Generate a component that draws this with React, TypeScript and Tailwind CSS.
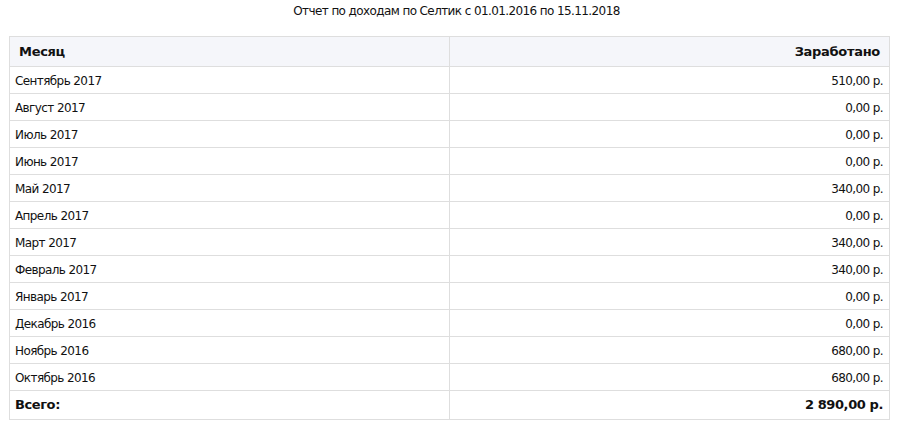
const rows: [string, string][] = [
  ['Сентябрь 2017', '510,00 р.'],
  ['Август 2017', '0,00 р.'],
  ['Июль 2017', '0,00 р.'],
  ['Июнь 2017', '0,00 р.'],
  ['Май 2017', '340,00 р.'],
  ['Апрель 2017', '0,00 р.'],
  ['Март 2017', '340,00 р.'],
  ['Февраль 2017', '340,00 р.'],
  ['Январь 2017', '0,00 р.'],
  ['Декабрь 2016', '0,00 р.'],
  ['Ноябрь 2016', '680,00 р.'],
  ['Октябрь 2016', '680,00 р.'],
];

export default function App() {
  return (
    <div className="w-[913px] h-[445px] bg-white text-[#111] font-['DejaVu_Sans',sans-serif]">
      {/* Title */}
      <div className="pt-[3px] text-center text-[12px] leading-[16px] tracking-[-0.6px]">
        Отчет по доходам по Селтик с 01.01.2016 по 15.11.2018
      </div>

      {/* Report table */}
      <table className="ml-[9px] mt-[17px] w-[881px] border-collapse table-fixed">
        <thead>
          <tr className="h-[30px] bg-[#f5f6fa]">
            <th className="w-1/2 border border-[#dedede] pl-[9px] text-left text-[13px] font-bold tracking-[-0.3px]">Месяц</th>
            <th className="w-1/2 border border-[#dedede] pr-[9px] text-right text-[13px] font-bold tracking-[-0.3px]">Заработано</th>
          </tr>
        </thead>
        <tbody>
          {rows.map(([month, sum]) => (
            <tr key={month} className="h-[27px]">
              <td className="border border-[#dedede] pl-[5px] pt-px text-[12px] tracking-[-0.6px]">{month}</td>
              <td className="border border-[#dedede] pr-[6px] pt-px text-right text-[12px] tracking-[-0.6px]">{sum}</td>
            </tr>
          ))}
          <tr className="h-[29px]">
            <td className="border border-[#dedede] pl-[5px] text-[13px] font-bold tracking-[-0.4px]">Всего:</td>
            <td className="border border-[#dedede] pr-[6px] text-right text-[13px] font-bold tracking-[-0.4px]">2 890,00 р.</td>
          </tr>
        </tbody>
      </table>
    </div>
  );
}
